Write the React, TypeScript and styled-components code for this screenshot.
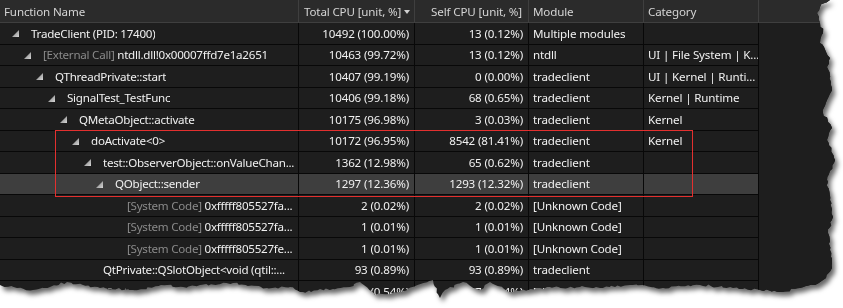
import React from 'react';
import styled, { createGlobalStyle } from 'styled-components';

const Global = createGlobalStyle`
  html, body { margin: 0; padding: 0; background: #ffffff; }
  body {
    width: 843px;
    height: 308px;
    overflow: hidden;
    font-family: "Noto Sans", "Segoe UI", sans-serif;
    font-size: 11.6px;
    letter-spacing: -0.15px;
  }
`;

const COLS = '299px 116px 114px 115px 115px 1fr';

type Pt = [number, number];

const EDGE: Pt[] = [
  [830, 0], [820, 7], [817, 13], [820, 23], [823, 33], [820, 43], [826, 52], [830, 58],
  [827, 67], [832, 88], [827, 100], [823, 113], [832, 128], [827, 140], [835, 160],
  [827, 180], [830, 200], [833, 217], [828, 233], [830, 250], [832, 268], [826, 278],
  [815, 285], [800, 288], [780, 292], [760, 290], [733, 288], [700, 285], [663, 288],
  [630, 285], [600, 288], [580, 287], [540, 288], [510, 292], [490, 282], [480, 290],
  [463, 282], [445, 290], [440, 298], [433, 280], [400, 292], [375, 295], [360, 282],
  [350, 287], [333, 289], [303, 292], [290, 287], [267, 288], [233, 283], [200, 285],
  [183, 287], [167, 285], [133, 290], [100, 288], [83, 285], [67, 282], [50, 287],
  [33, 290], [17, 288], [0, 285],
];

function buildTorn(): string {
  let seed = 12345;
  const rnd = () => {
    seed = (seed * 16807) % 2147483647;
    return seed / 2147483647;
  };
  const pts: string[] = ['0px 0px'];
  for (let i = 0; i < EDGE.length - 1; i++) {
    const [x0, y0] = EDGE[i];
    const [x1, y1] = EDGE[i + 1];
    const d = Math.hypot(x1 - x0, y1 - y0);
    const n = Math.max(1, Math.round(d / 3));
    for (let k = 0; k < n; k++) {
      const t = k / n;
      let x = x0 + (x1 - x0) * t;
      let y = y0 + (y1 - y0) * t;
      if (k > 0) {
        x += (rnd() - 0.5) * 2.4;
        y += (rnd() - 0.5) * 2.4;
      }
      pts.push(`${x.toFixed(1)}px ${y.toFixed(1)}px`);
    }
  }
  const last = EDGE[EDGE.length - 1];
  pts.push(`${last[0]}px ${last[1]}px`);
  return `polygon(${pts.join(', ')})`;
}

const TORN = buildTorn();

const Shadow = styled.div`
  width: 843px;
  height: 308px;
  filter: drop-shadow(3px 4px 2.5px rgba(0, 0, 0, 0.6));
`;

const Panel = styled.div`
  position: relative;
  width: 843px;
  height: 308px;
  background: #1e1e1e;
  clip-path: ${TORN};
  overflow: hidden;
`;

const HeaderRow = styled.div`
  display: grid;
  grid-template-columns: ${COLS};
  height: 23px;
  background: #2b2b2b;
  border-bottom: 1px solid #3f3f3f;
  box-sizing: border-box;
`;

const HeadCell = styled.div<{ $right?: boolean; $pl?: number; $pr?: number }>`
  display: flex;
  align-items: center;
  justify-content: ${(p) => (p.$right ? 'flex-end' : 'flex-start')};
  padding-left: ${(p) => p.$pl ?? 4}px;
  padding-right: ${(p) => p.$pr ?? 4}px;
  border-right: 1px solid #3f3f3f;
  color: #d4d4d4;
  white-space: nowrap;
  overflow: hidden;
  box-sizing: border-box;
`;

const HeadFiller = styled.div``;

const SortArrow = styled.span`
  display: inline-block;
  margin-left: 3px;
  margin-top: 1px;
  width: 0;
  height: 0;
  border-left: 3.5px solid transparent;
  border-right: 3.5px solid transparent;
  border-top: 4px solid #d0d0d0;
`;

const Row = styled.div<{ $selected?: boolean }>`
  display: grid;
  grid-template-columns: ${COLS};
  height: 21.5px;
  background: ${(p) => (p.$selected ? '#3e3e3e' : 'transparent')};
`;

const Cell = styled.div<{ $right?: boolean }>`
  display: flex;
  align-items: center;
  justify-content: ${(p) => (p.$right ? 'flex-end' : 'flex-start')};
  padding: ${(p) => (p.$right ? '0 5px 0 4px' : '0 2px 0 4px')};
  border-right: 1px solid #080808;
  border-bottom: 1px solid #080808;
  box-sizing: border-box;
  color: #f0f0f0;
  white-space: nowrap;
  overflow: hidden;
  min-width: 0;
`;

const FuncCell = styled(Cell)<{ $level: number }>`
  padding-left: ${(p) => 12 + 12 * p.$level}px;
  padding-right: 1px;
  letter-spacing: -0.25px;
`;

const Filler = styled.div`
  background: #1e1e1e;
`;

const Label = styled.span`
  overflow: hidden;
  text-overflow: ellipsis;
`;

const Dim = styled.span`
  color: #8a8a8a;
`;

const ExpandBox = styled.span`
  display: inline-flex;
  flex: none;
  width: 7px;
  height: 7px;
  margin-right: 12px;
  margin-top: 1px;
`;

const Highlight = styled.div`
  position: absolute;
  left: 55px;
  top: 130px;
  width: 638px;
  height: 67px;
  border: 1px solid #e3302f;
  box-sizing: border-box;
  pointer-events: none;
`;

const Expander: React.FC<{ leaf?: boolean }> = ({ leaf }) => (
  <ExpandBox>
    {!leaf && (
      <svg width="7" height="7" viewBox="0 0 7 7">
        <defs>
          <linearGradient id="tri" x1="0" y1="0" x2="1" y2="1">
            <stop offset="0" stopColor="#6f6f6f" />
            <stop offset="1" stopColor="#d8d8d8" />
          </linearGradient>
        </defs>
        <polygon points="0,7 7,0 7,7" fill="url(#tri)" />
      </svg>
    )}
  </ExpandBox>
);

type RowData = {
  level: number;
  leaf?: boolean;
  prefix?: string;
  name: string;
  total: string;
  self: string;
  module: string;
  category: string;
  selected?: boolean;
};

const rows: RowData[] = [
  { level: 0, name: 'TradeClient (PID: 17400)', total: '10492 (100.00%)', self: '13 (0.12%)', module: 'Multiple modules', category: '' },
  { level: 1, prefix: '[External Call]', name: 'ntdll.dll!0x00007ffd7e1a2651', total: '10463 (99.72%)', self: '13 (0.12%)', module: 'ntdll', category: 'UI | File System | K...' },
  { level: 2, name: 'QThreadPrivate::start', total: '10407 (99.19%)', self: '0 (0.00%)', module: 'tradeclient', category: 'UI | Kernel | Runti...' },
  { level: 3, name: 'SignalTest_TestFunc', total: '10406 (99.18%)', self: '68 (0.65%)', module: 'tradeclient', category: 'Kernel | Runtime' },
  { level: 4, name: 'QMetaObject::activate', total: '10175 (96.98%)', self: '3 (0.03%)', module: 'tradeclient', category: 'Kernel' },
  { level: 5, name: 'doActivate<0>', total: '10172 (96.95%)', self: '8542 (81.41%)', module: 'tradeclient', category: 'Kernel' },
  { level: 6, name: 'test::ObserverObject::onValueChan...', total: '1362 (12.98%)', self: '65 (0.62%)', module: 'tradeclient', category: '' },
  { level: 7, name: 'QObject::sender', total: '1297 (12.36%)', self: '1293 (12.32%)', module: 'tradeclient', category: '', selected: true },
  { level: 8, leaf: true, prefix: '[System Code]', name: '0xfffff805527fa...', total: '2 (0.02%)', self: '2 (0.02%)', module: '[Unknown Code]', category: '' },
  { level: 8, leaf: true, prefix: '[System Code]', name: '0xfffff805527fa...', total: '1 (0.01%)', self: '1 (0.01%)', module: '[Unknown Code]', category: '' },
  { level: 8, leaf: true, prefix: '[System Code]', name: '0xfffff805527fe...', total: '1 (0.01%)', self: '1 (0.01%)', module: '[Unknown Code]', category: '' },
  { level: 6, leaf: true, name: 'QtPrivate::QSlotObject<void (qtil::...', total: '93 (0.89%)', self: '93 (0.89%)', module: 'tradeclient', category: '' },
  { level: 6, leaf: true, prefix: '[System Code]', name: '0xfffff805527fc...', total: '57 (0.54%)', self: '57 (0.54%)', module: '[Unknown Code]', category: '' },
];

export default function App() {
  return (
    <>
      <Global />
      <Shadow>
        <Panel>
          <HeaderRow>
            <HeadCell>Function Name</HeadCell>
            <HeadCell $pl={5}>
              Total CPU [unit, %]
              <SortArrow />
            </HeadCell>
            <HeadCell $right $pr={6}>Self CPU [unit, %]</HeadCell>
            <HeadCell>Module</HeadCell>
            <HeadCell>Category</HeadCell>
            <HeadFiller />
          </HeaderRow>
          {rows.map((r, i) => (
            <Row key={i} $selected={r.selected}>
              <FuncCell $level={r.level}>
                <Expander leaf={r.leaf} />
                <Label>
                  {r.prefix && <Dim>{r.prefix} </Dim>}
                  {r.name}
                </Label>
              </FuncCell>
              <Cell $right>{r.total}</Cell>
              <Cell $right>{r.self}</Cell>
              <Cell>{r.module}</Cell>
              <Cell>{r.category}</Cell>
              <Filler />
            </Row>
          ))}
          <Highlight />
        </Panel>
      </Shadow>
    </>
  );
}
